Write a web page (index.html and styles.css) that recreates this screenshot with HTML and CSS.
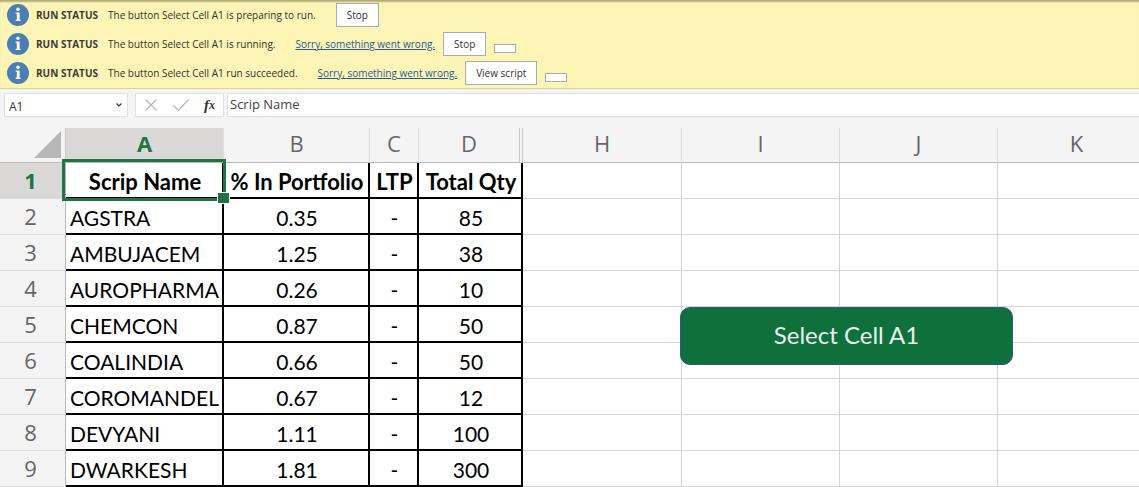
FILE: index.html
```html
<!DOCTYPE html>
<html lang="en">
<head>
<meta charset="utf-8">
<title>Scrip Name - Workbook</title>
<link rel="stylesheet" href="styles.css">
</head>
<body>
<svg class="defs" aria-hidden="true">
  <symbol id="info" viewBox="0 0 22 22">
    <circle cx="11" cy="11" r="11" fill="#4a7fb5"/>
    <circle cx="11" cy="5.3" r="1.7" fill="#fff"/>
    <path d="M8.7 8.5h3.9v7.3h1v1.2H8.7v-1.2h1.1V9.7H8.7z" fill="#fff"/>
  </symbol>
</svg>

<section class="messages" aria-label="Run status">
  <div class="message">
    <svg class="info"><use href="#info"/></svg>
    <strong>RUN STATUS</strong>
    <span class="text">The button Select Cell A1 is preparing to run.</span>
    <button type="button" class="action first">Stop</button>
  </div>
  <div class="message">
    <svg class="info"><use href="#info"/></svg>
    <strong>RUN STATUS</strong>
    <span class="text">The button Select Cell A1 is running.</span>
    <a href="#error">Sorry, something went wrong.</a>
    <button type="button" class="action">Stop</button>
    <button type="button" class="empty" aria-label="Dismiss"></button>
  </div>
  <div class="message">
    <svg class="info"><use href="#info"/></svg>
    <strong>RUN STATUS</strong>
    <span class="text">The button Select Cell A1 run succeeded.</span>
    <a href="#error">Sorry, something went wrong.</a>
    <button type="button" class="action">View script</button>
    <button type="button" class="empty" aria-label="Dismiss"></button>
  </div>
</section>

<div class="formula-bar">
  <div class="name-box">
    <input type="text" value="A1" aria-label="Name box">
    <svg viewBox="0 0 8 6" class="chevron"><path d="M1.5 1.5 4 4l2.500-2.500" fill="none" stroke="#333" stroke-width="1.200"/></svg>
  </div>
  <div class="tools">
    <button type="button" aria-label="Cancel"><svg width="14" height="14" viewBox="0 0 14 14"><path d="M1.500 1.500l11 11M12.500 1.500l-11 11" fill="none" stroke="#b5b5b5" stroke-width="1.200"/></svg></button>
    <button type="button" aria-label="Enter"><svg width="18" height="14" viewBox="0 0 18 14"><path d="M1.500 7.500l5 5 10-11" fill="none" stroke="#b5b5b5" stroke-width="1.200"/></svg></button>
    <button type="button" class="fx" aria-label="Insert function">f<span>x</span></button>
  </div>
  <input class="formula" type="text" value="Scrip Name" aria-label="Formula">
</div>

<main class="sheet">
  <table>
    <colgroup><col class="c-num"><col class="c-a"><col class="c-b"><col class="c-c"><col class="c-d"><col class="c-h"><col class="c-i"><col class="c-i"><col></colgroup>
    <thead>
      <tr><th class="corner"><svg width="27" height="27" viewBox="0 0 27 27" aria-hidden="true"><path d="M27 0v27H0z" fill="#b7b7b7"/></svg></th><th class="active">A</th><th>B</th><th>C</th><th class="hidden-after">D</th><th>H</th><th>I</th><th>J</th><th class="last">K</th></tr>
    </thead>
    <tbody>
      <tr class="titles"><th class="active">1</th><td class="d selected">Scrip Name<span class="selection"></span></td><td class="d">% In Portfolio</td><td class="d">LTP</td><td class="d">Total Qty</td><td></td><td></td><td></td><td></td></tr>
      <tr><th>2</th><td class="d name">AGSTRA</td><td class="d">0.35</td><td class="d">-</td><td class="d">85</td><td></td><td></td><td></td><td></td></tr>
      <tr><th>3</th><td class="d name">AMBUJACEM</td><td class="d">1.25</td><td class="d">-</td><td class="d">38</td><td></td><td></td><td></td><td></td></tr>
      <tr><th>4</th><td class="d name">AUROPHARMA</td><td class="d">0.26</td><td class="d">-</td><td class="d">10</td><td></td><td></td><td></td><td></td></tr>
      <tr><th>5</th><td class="d name">CHEMCON</td><td class="d">0.87</td><td class="d">-</td><td class="d">50</td><td></td><td></td><td></td><td></td></tr>
      <tr><th>6</th><td class="d name">COALINDIA</td><td class="d">0.66</td><td class="d">-</td><td class="d">50</td><td></td><td></td><td></td><td></td></tr>
      <tr><th>7</th><td class="d name">COROMANDEL</td><td class="d">0.67</td><td class="d">-</td><td class="d">12</td><td></td><td></td><td></td><td></td></tr>
      <tr><th>8</th><td class="d name">DEVYANI</td><td class="d">1.11</td><td class="d">-</td><td class="d">100</td><td></td><td></td><td></td><td></td></tr>
      <tr><th>9</th><td class="d name">DWARKESH</td><td class="d">1.81</td><td class="d">-</td><td class="d">300</td><td></td><td></td><td></td><td></td></tr>
    </tbody>
  </table>
  <button type="button" class="script-button">Select Cell A1</button>
</main>
</body>
</html>
```

FILE: styles.css
```css
* { box-sizing: border-box; }

body {
  margin: 0;
  background: #f4f4f4;
  color: #333;
  font-family: "Open Sans", "Noto Sans", sans-serif;
  font-size: 12px;
}

button, input { font: inherit; color: inherit; }

.defs { display: none; }

/* Status messages */
.messages {
  background: #fcf5b5;
  border-top: 1px solid #b3ae79;
  border-bottom: 1px solid #dbd584;
  box-shadow: inset 0 2px 2px -1px #b3ae79;
  font-size: 10px;
}

.message {
  display: flex;
  align-items: center;
  height: 29px;
  padding: 0 0 1px 7px;
  white-space: nowrap;
}

.info { width: 22px; height: 22px; margin-right: 7px; }
.message strong { min-width: 64px; margin-right: 8px; color: #3b3b3b; }
.message a { margin-left: 20px; color: #1f5c99; }

.action {
  height: 24px;
  margin-left: 8px;
  padding: 0 10px;
  border: 1px solid #ababab;
  background: #fff;
}

.action.first { margin-left: 20px; }

.empty {
  align-self: flex-end;
  width: 22px;
  height: 9px;
  margin: 0 0 5px 8px;
  padding: 0;
  border: 1px solid #ababab;
  background: #fff;
}

/* Formula bar */
.formula-bar {
  display: flex;
  gap: 7px;
  padding: 4px 0 11px 4px;
}

.name-box, .tools {
  display: flex;
  align-items: center;
  height: 24px;
  border: 1px solid #e1e1e1;
  background: #fff;
}

.name-box { width: 124px; padding-right: 4px; }
.name-box input { flex: 1; min-width: 0; border: 0; padding: 2px 4px 0; background: none; }
.chevron { width: 8px; height: 6px; }

.tools { width: 89px; justify-content: space-between; padding: 0 8px; }
.tools button { display: flex; padding: 0; border: 0; background: none; }
.tools .fx { font: italic bold 15px/20px "Liberation Serif", serif; }
.fx span { font-size: 12px; }

.formula {
  flex: 1;
  min-width: 0;
  height: 24px;
  margin-left: -4px;
  padding: 0 2px 2px;
  border: 1px solid #e1e1e1;
  border-right: 0;
  background: #fff;
  color: #444;
  font-size: 13px;
}

/* Grid */
.sheet { position: relative; overflow: hidden; }

table {
  width: 100%;
  table-layout: fixed;
  border-collapse: separate;
  border-spacing: 0;
  background: #fff;
}

.c-num { width: 66px; }
.c-a { width: 158px; }
.c-b { width: 146px; }
.c-c { width: 49px; }
.c-d { width: 104px; }
.c-h { width: 159px; }
.c-i { width: 158px; }

th, td { padding: 0; white-space: nowrap; }

th {
  background: #f4f4f4;
  color: #666;
  font-size: 22px;
  font-weight: 400;
  line-height: 30px;
}

thead th {
  height: 35px;
  padding-bottom: 4px;
  border-right: 1px solid #dcdcdc;
  border-bottom: 1px solid #b9b9b9;
}

thead th.corner { padding: 3px 4px 4px 0; border-right-color: #c6c6c6; text-align: right; }
.corner svg { display: block; margin-left: auto; }
thead th.hidden-after { border-right: 4px double #c8c8c8; }
thead th.last { padding-left: 16px; border-right: 0; }

tbody th {
  height: 36px;
  padding: 0 4px 2px 0;
  border-right: 1px solid #b9b9b9;
  border-bottom: 1px solid #dcdcdc;
}

th.active { background: #d9d8d6; color: #217346; font-weight: 700; }

td {
  border-right: 1px solid #d4d4d4;
  border-bottom: 1px solid #d4d4d4;
  color: #000;
  font-family: Lato, sans-serif;
  font-size: 21px;
  line-height: 30px;
  text-align: center;
}

td:last-child { border-right: 0; }

td.d {
  padding: 4px 0 0 2px;
  border-right: 2px solid #000;
  border-bottom: 2px solid #000;
}

td.name { padding-left: 4px; text-align: left; }
.titles td { font-size: 22px; font-weight: 700; }

.selected { position: relative; }

.selection {
  position: absolute;
  top: -4px;
  right: -4px;
  bottom: -4px;
  left: -4px;
  border: 3px solid #217346;
}

.selection::after {
  content: "";
  position: absolute;
  right: -7px;
  bottom: -6px;
  width: 11px;
  height: 10px;
  border: 1px solid #fff;
  background: #217346;
}

.script-button {
  position: absolute;
  top: 179px;
  left: 680px;
  width: 333px;
  height: 58px;
  padding: 0 0 4px;
  border: 1px solid #2f5597;
  border-radius: 10px;
  background: #10703c;
  color: #e8f2ec;
  font-family: Lato, sans-serif;
  font-size: 24px;
}
```
